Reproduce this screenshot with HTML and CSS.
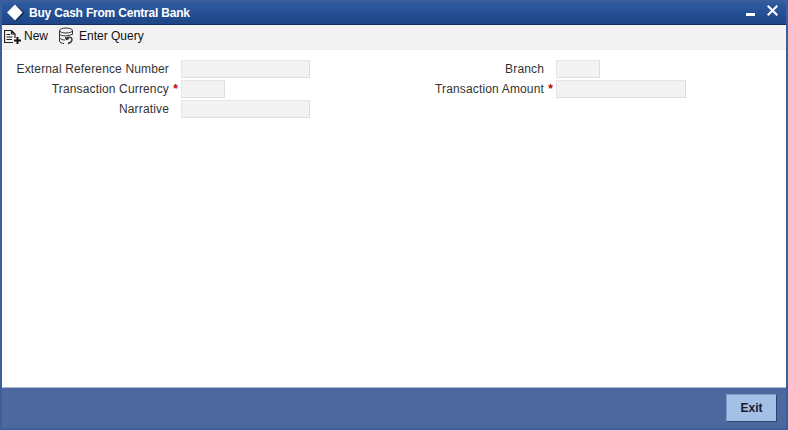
FILE: index.html
```html
<!DOCTYPE html>
<html lang="en">

<head>
    <meta charset="UTF-8">
    <title>Buy Cash From Central Bank</title>
    <link rel="stylesheet" href="styles.css">
</head>

<body>
    <div class="window">
        <div class="titlebar">
            <svg class="logo" width="22" height="18" viewBox="0 0 22 18">
                <path d="M10 0.500 L18.500 9 L10 17.500 L2 9 Z" fill="#10294f" />
                <path d="M9 0.500 L16.500 8.500 L9 16.500 L1 8.500 Z" fill="#ffffff" />
            </svg>
            <span class="title">Buy Cash From Central Bank</span>
            <div class="winbtns">
                <svg width="9" height="3" viewBox="0 0 9 3">
                    <rect width="9" height="3" fill="#ffffff" />
                </svg>
                <svg width="11" height="11" viewBox="0 0 11 11">
                    <path d="M0.700 0.700 L10.300 10.300 M10.300 0.700 L0.700 10.300" stroke="#ffffff" stroke-width="2" fill="none" />
                </svg>
            </div>
        </div>

        <div class="toolbar">
            <div class="tool">
                <svg width="18" height="18" viewBox="0 0 18 18">
                    <path d="M0.500 16 V3.500 H7.500 L11 7 V11 M7.500 3.500 V7 H11 M2.500 7.500 H6 M2.500 10 H8.500 M2.500 12.500 H8 M0.500 15.500 H9" stroke="#222222" stroke-width="1.200" fill="none" />
                    <path d="M13.500 10 V17 M10 13.500 H17" stroke="#111111" stroke-width="2" fill="none" />
                </svg>
                <span>New</span>
            </div>
            <div class="tool">
                <svg width="18" height="18" viewBox="0 0 18 18">
                    <ellipse cx="7" cy="3.500" rx="6.500" ry="2.500" stroke="#333333" fill="#f3f3f3" />
                    <path d="M0.500 3.500 V14 C0.500 15.500 3 16.500 5 16.500 M13.500 3.500 V7.500 M0.500 7 C2 9.500 10 9.500 13.500 7 M0.500 10.500 C1.500 12.500 4 13 6 13" stroke="#333333" fill="none" />
                    <path d="M7.500 12 C8.500 9.500 12 9.500 13 12 C13.500 14 11.500 16 9 16.500 M6.500 10 L7.500 12.500 L10 11.500" stroke="#222222" stroke-width="1.300" fill="none" />
                </svg>
                <span>Enter Query</span>
            </div>
        </div>

        <div class="content">
            <div class="form">
                <div class="col col-left">
                    <label class="lbl">External Reference Number</label>
                    <input class="fld" type="text">
                    <label class="lbl">Transaction Currency<span class="req">*</span></label>
                    <input class="fld fld-sm" type="text">
                    <label class="lbl">Narrative</label>
                    <input class="fld" type="text">
                </div>
                <div class="col col-right">
                    <label class="lbl">Branch</label>
                    <input class="fld fld-sm" type="text">
                    <label class="lbl">Transaction Amount<span class="req">*</span></label>
                    <input class="fld" type="text">
                </div>
            </div>
        </div>

        <div class="footer">
            <button class="exit">Exit</button>
        </div>
    </div>
</body>

</html>
```

FILE: styles.css
```css
* {
    box-sizing: border-box;
}

html,
body {
    margin: 0;
    height: 100%;
    overflow: hidden;
}

body {
    font-family: "Liberation Sans", Arial, sans-serif;
    font-size: 12px;
    color: #333333;
}

.window {
    display: flex;
    flex-direction: column;
    width: 788px;
    height: 430px;
    background-color: #3a5f9c;
    padding: 2px;
}

.titlebar {
    display: flex;
    align-items: center;
    height: 23px;
    padding: 0 8px 0 4px;
    background: linear-gradient(#2f5b9f, #1d4588);
    border-bottom: 1px solid #12305f;
}

.logo {
    margin-right: 1px;
}

.title {
    color: #ffffff;
    font-weight: bold;
    letter-spacing: -0.2px;
}

.winbtns {
    display: flex;
    align-items: flex-end;
    margin-left: auto;
    padding-bottom: 5px;
    gap: 12px;
}

.toolbar {
    display: flex;
    align-items: center;
    height: 25px;
    padding: 0 0 3px 2px;
    gap: 11px;
    background-color: #f3f3f3;
    border-bottom: 1px solid #ececec;
}

.tool {
    display: flex;
    align-items: center;
    gap: 2px;
    color: #111111;
}

.content {
    flex: 1;
    background-color: #ffffff;
    padding-top: 10px;
}

.form {
    display: flex;
}

.col {
    display: grid;
    row-gap: 2px;
    align-items: center;
    justify-items: start;
    align-self: flex-start;
}

.col-left {
    grid-template-columns: 179px 129px;
}

.col-right {
    grid-template-columns: 246px 130px;
}

.lbl {
    justify-self: stretch;
    height: 18px;
    line-height: 18px;
    text-align: right;
    padding-right: 12px;
    letter-spacing: 0.15px;
    position: relative;
}

.req {
    position: absolute;
    right: 3px;
    top: 0;
    color: #c00000;
    font-weight: bold;
}

.fld {
    width: 129px;
    height: 18px;
    padding: 0;
    background-color: #f3f3f3;
    border: 1px solid #e6e6e6;
    border-bottom-color: #dddddd;
    border-right-color: #dddddd;
}

.col-right .fld {
    width: 130px;
}

.col .fld-sm {
    width: 44px;
}

.footer {
    display: flex;
    align-items: center;
    justify-content: flex-end;
    height: 41px;
    padding-right: 9px;
    background-color: #4c689f;
    border-top: 1px solid #a9b8d3;
}

.exit {
    width: 51px;
    height: 28px;
    padding: 0;
    font-family: inherit;
    font-size: 12px;
    font-weight: bold;
    color: #1a1a2a;
    background-color: #a3c0e6;
    border: 1px solid #7f9cc6;
    border-right-color: #2e4470;
    border-bottom-color: #2e4470;
}
```
